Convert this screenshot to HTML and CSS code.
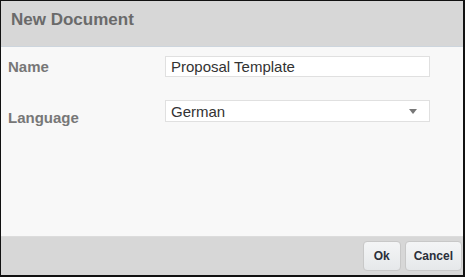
FILE: index.html
```html
<!DOCTYPE html>
<html lang="en">

<head>
    <meta charset="UTF-8">
    <meta name="viewport" content="width=device-width, initial-scale=1.0">
    <title>New Document</title>
    <link rel="stylesheet" href="styles.css">
</head>

<body>
    <div class="dialog">
        <div class="dialog-header">
            <h1>New Document</h1>
        </div>

        <div class="dialog-body">
            <div class="form-row">
                <label for="name">Name</label>
                <input type="text" id="name" value="Proposal Template">
            </div>

            <div class="form-row form-row-lang">
                <label for="language">Language</label>
                <div class="select-box" id="language">
                    <span>German</span>
                    <span class="arrow"></span>
                </div>
            </div>
        </div>

        <div class="dialog-footer">
            <button>Ok</button>
            <button>Cancel</button>
        </div>
    </div>
</body>

</html>
```

FILE: styles.css
```css
html,
body {
    margin: 0;
    height: 100%;
}

body {
    font-family: "Liberation Sans", Arial, sans-serif;
}

.dialog {
    box-sizing: border-box;
    height: 100vh;
    display: flex;
    flex-direction: column;
    border-top: 1px solid #111;
    border-left: 1px solid #111;
    border-right: 2px solid #111;
    border-bottom: 2px solid #111;
    background-color: #f8f8f8;
}

.dialog-header {
    height: 46px;
    box-sizing: border-box;
    background-color: #d7d7d7;
    border-bottom: 1px solid #cdd5dd;
    padding: 9px 10px 0;
}

.dialog-header h1 {
    margin: 0;
    font-size: 17px;
    line-height: 20px;
    color: #6a6a6a;
}

.dialog-body {
    flex: 1;
    padding: 9px 0 0 7px;
}

.form-row {
    display: flex;
    align-items: flex-start;
    margin-bottom: 22px;
}

.form-row label {
    width: 157px;
    padding-top: 1px;
    font-size: 15px;
    font-weight: bold;
    line-height: 20px;
    color: #777;
}

.form-row-lang {
    padding-top: 1px;
}

.form-row-lang label {
    padding-top: 8px;
}

.form-row input,
.select-box {
    box-sizing: border-box;
    width: 265px;
    height: 21px;
    margin: 0;
    padding: 0 5px;
    border: 1px solid #e0e0e0;
    background-color: #fff;
    font-family: "Liberation Sans", Arial, sans-serif;
    font-size: 15px;
    color: #333;
    outline: none;
}

.select-box {
    height: 22px;
    display: flex;
    align-items: center;
    justify-content: space-between;
    line-height: 19px;
}

.arrow {
    width: 0;
    height: 0;
    margin-right: 7px;
    border-left: 4px solid transparent;
    border-right: 4px solid transparent;
    border-top: 5px solid #777;
}

.dialog-footer {
    height: 39px;
    box-sizing: border-box;
    background-color: #d7d7d7;
    border-top: 1px solid #dcdcdc;
    display: flex;
    justify-content: flex-end;
    align-items: center;
    gap: 4px;
    padding: 0 1px 0 0;
}

.dialog-footer button {
    box-sizing: border-box;
    min-width: 38px;
    height: 30px;
    padding: 0 8px;
    border: 1px solid #c8c8c8;
    border-radius: 4px;
    background: linear-gradient(#f4f5f6, #e6e8ea);
    font-family: "Liberation Sans", Arial, sans-serif;
    font-size: 12px;
    font-weight: bold;
    color: #2a2f3a;
}
```
